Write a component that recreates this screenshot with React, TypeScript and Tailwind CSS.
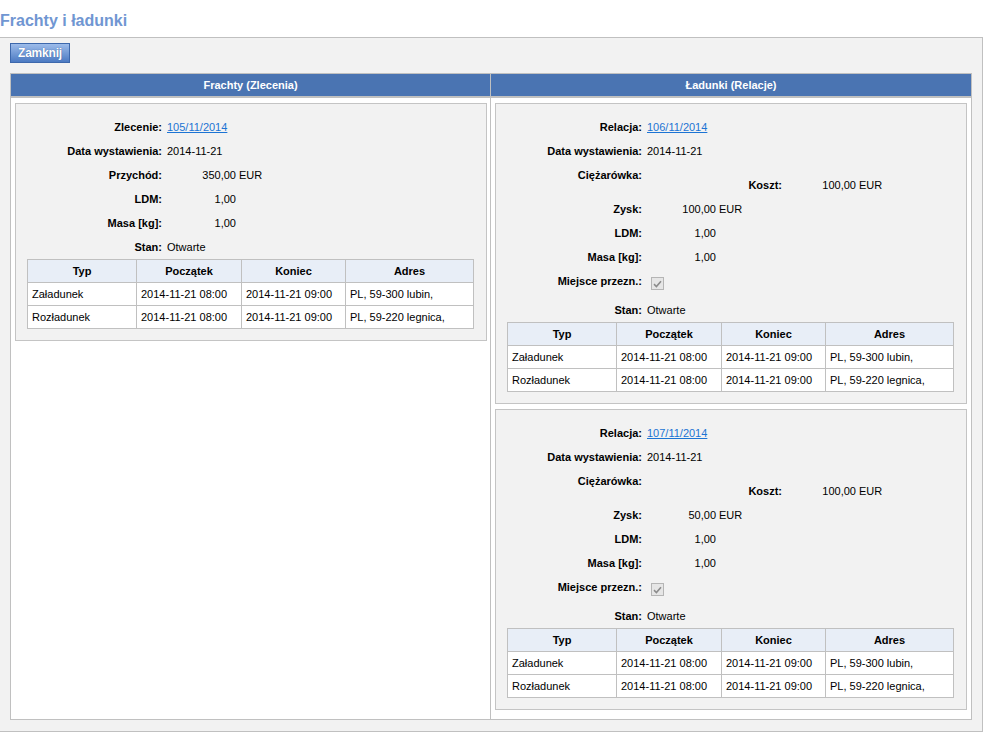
import type { ReactNode } from 'react';

type Stop = { typ: string; start: string; end: string; adres: string };

const stops: Stop[] = [
  { typ: 'Załadunek', start: '2014-11-21 08:00', end: '2014-11-21 09:00', adres: 'PL, 59-300 lubin,' },
  { typ: 'Rozładunek', start: '2014-11-21 08:00', end: '2014-11-21 09:00', adres: 'PL, 59-220 legnica,' },
];

function Label({ children }: { children: ReactNode }) {
  return (
    <div className="flex h-[24px] w-[135px] shrink-0 items-center justify-end font-bold">{children}</div>
  );
}

function Row({ label, children }: { label: string; children: ReactNode }) {
  return (
    <div className="flex h-[24px] items-center">
      <Label>{label}</Label>
      <div className="ml-[5px] flex items-center">{children}</div>
    </div>
  );
}

function Amount({ value, unit }: { value: string; unit?: string }) {
  return (
    <span className="flex">
      <span className="w-[69px] text-right">{value}</span>
      {unit && <span className="pl-[3px]">{unit}</span>}
    </span>
  );
}

function Link({ children }: { children: ReactNode }) {
  return <a className="text-[#1c74d4] underline">{children}</a>;
}

function StopsTable() {
  return (
    <table className="w-[447px] table-fixed border-collapse">
      <colgroup>
        <col className="w-[109px]" />
        <col className="w-[105px]" />
        <col className="w-[104px]" />
        <col />
      </colgroup>
      <thead>
        <tr className="h-[23px] bg-[#e8eef7]">
          {['Typ', 'Początek', 'Koniec', 'Adres'].map((h) => (
            <th key={h} className="border border-[#c0c0c0] p-0 text-center font-bold">
              {h}
            </th>
          ))}
        </tr>
      </thead>
      <tbody>
        {stops.map((s) => (
          <tr key={s.typ} className="h-[23px] bg-white">
            <td className="border border-[#c0c0c0] py-0 pl-[4px] text-left">{s.typ}</td>
            <td className="border border-[#c0c0c0] py-0 pl-[4px] text-left">{s.start}</td>
            <td className="border border-[#c0c0c0] py-0 pl-[4px] text-left">{s.end}</td>
            <td className="border border-[#c0c0c0] py-0 pl-[4px] text-left">{s.adres}</td>
          </tr>
        ))}
      </tbody>
    </table>
  );
}

function Box({ children }: { children: ReactNode }) {
  return (
    <div className="mb-[5px] w-[472px] border border-[#c4c4c4] bg-[#f2f2f2] pt-[11px] pr-[12px] pb-[11px] pl-[11px]">
      {children}
    </div>
  );
}

function Checked() {
  return (
    <span className="mt-[8px] ml-[9px] flex h-[13px] w-[13px] items-center justify-center border border-[#b5b5b5] bg-[#e6e6e6]">
      <svg width="9" height="8" viewBox="0 0 9 8">
        <path d="M1 4.2 L3.4 6.5 L8 1.2" fill="none" stroke="#8c8c8c" strokeWidth="1.6" />
      </svg>
    </span>
  );
}

function FrachtBox() {
  return (
    <Box>
      <Row label="Zlecenie:">
        <Link>105/11/2014</Link>
      </Row>
      <Row label="Data wystawienia:">2014-11-21</Row>
      <Row label="Przychód:">
        <Amount value="350,00" unit="EUR" />
      </Row>
      <Row label="LDM:">
        <Amount value="1,00" />
      </Row>
      <Row label="Masa [kg]:">
        <Amount value="1,00" />
      </Row>
      <Row label="Stan:">Otwarte</Row>
      <StopsTable />
    </Box>
  );
}

function RelacjaBox({ nr, zysk }: { nr: string; zysk: string }) {
  return (
    <Box>
      <Row label="Relacja:">
        <Link>{nr}</Link>
      </Row>
      <Row label="Data wystawienia:">2014-11-21</Row>
      <div className="flex h-[34px] items-start">
        <Label>Ciężarówka:</Label>
        <div className="ml-[5px] pt-[10px]">
          <Row label="Koszt:">
            <Amount value="100,00" unit="EUR" />
          </Row>
        </div>
      </div>
      <Row label="Zysk:">
        <Amount value={zysk} unit="EUR" />
      </Row>
      <Row label="LDM:">
        <Amount value="1,00" />
      </Row>
      <Row label="Masa [kg]:">
        <Amount value="1,00" />
      </Row>
      <div className="flex h-[29px] items-start">
        <Label>Miejsce przezn.:</Label>
        <Checked />
      </div>
      <Row label="Stan:">Otwarte</Row>
      <StopsTable />
    </Box>
  );
}

export default function App() {
  return (
    <div className="min-h-screen bg-white font-['Liberation_Sans',Arial,sans-serif] text-[11px] text-black">
      <h1 className="h-[37px] pt-[11px] text-[16px] leading-[19px] font-bold text-[#7096d2]">
        Frachty i ładunki
      </h1>
      <div className="w-[983px] border-t border-r border-b border-[#c0c0c0] bg-[#f2f2f2] px-[10px] pt-[5px] pb-[11px]">
        <button
          type="button"
          className="flex h-[20px] w-[60px] items-center justify-center border border-[#3d68ac] bg-gradient-to-b from-[#9dbcea] to-[#4c7ac2] text-[12px] font-bold tracking-[-0.2px] text-white [text-shadow:0_0_1px_#2f5796]"
        >
          Zamknij
        </button>
        <div className="mt-[10px] grid grid-cols-[479px_481px] border border-[#c0c0c0] bg-white">
          <div className="box-content flex h-[22px] items-center justify-center border-b-2 border-[#c0c0c0] bg-[#4a74b2] font-bold text-white">
            Frachty (Zlecenia)
          </div>
          <div className="box-content flex h-[22px] items-center justify-center border-b-2 border-l border-[#c0c0c0] bg-[#4a74b2] font-bold text-white">
            Ładunki (Relacje)
          </div>
          <div className="px-[4px] pt-[5px] pb-[4px]">
            <FrachtBox />
          </div>
          <div className="border-l border-[#c0c0c0] px-[4px] pt-[5px] pb-[4px]">
            <RelacjaBox nr="106/11/2014" zysk="100,00" />
            <RelacjaBox nr="107/11/2014" zysk="50,00" />
          </div>
        </div>
      </div>
    </div>
  );
}
